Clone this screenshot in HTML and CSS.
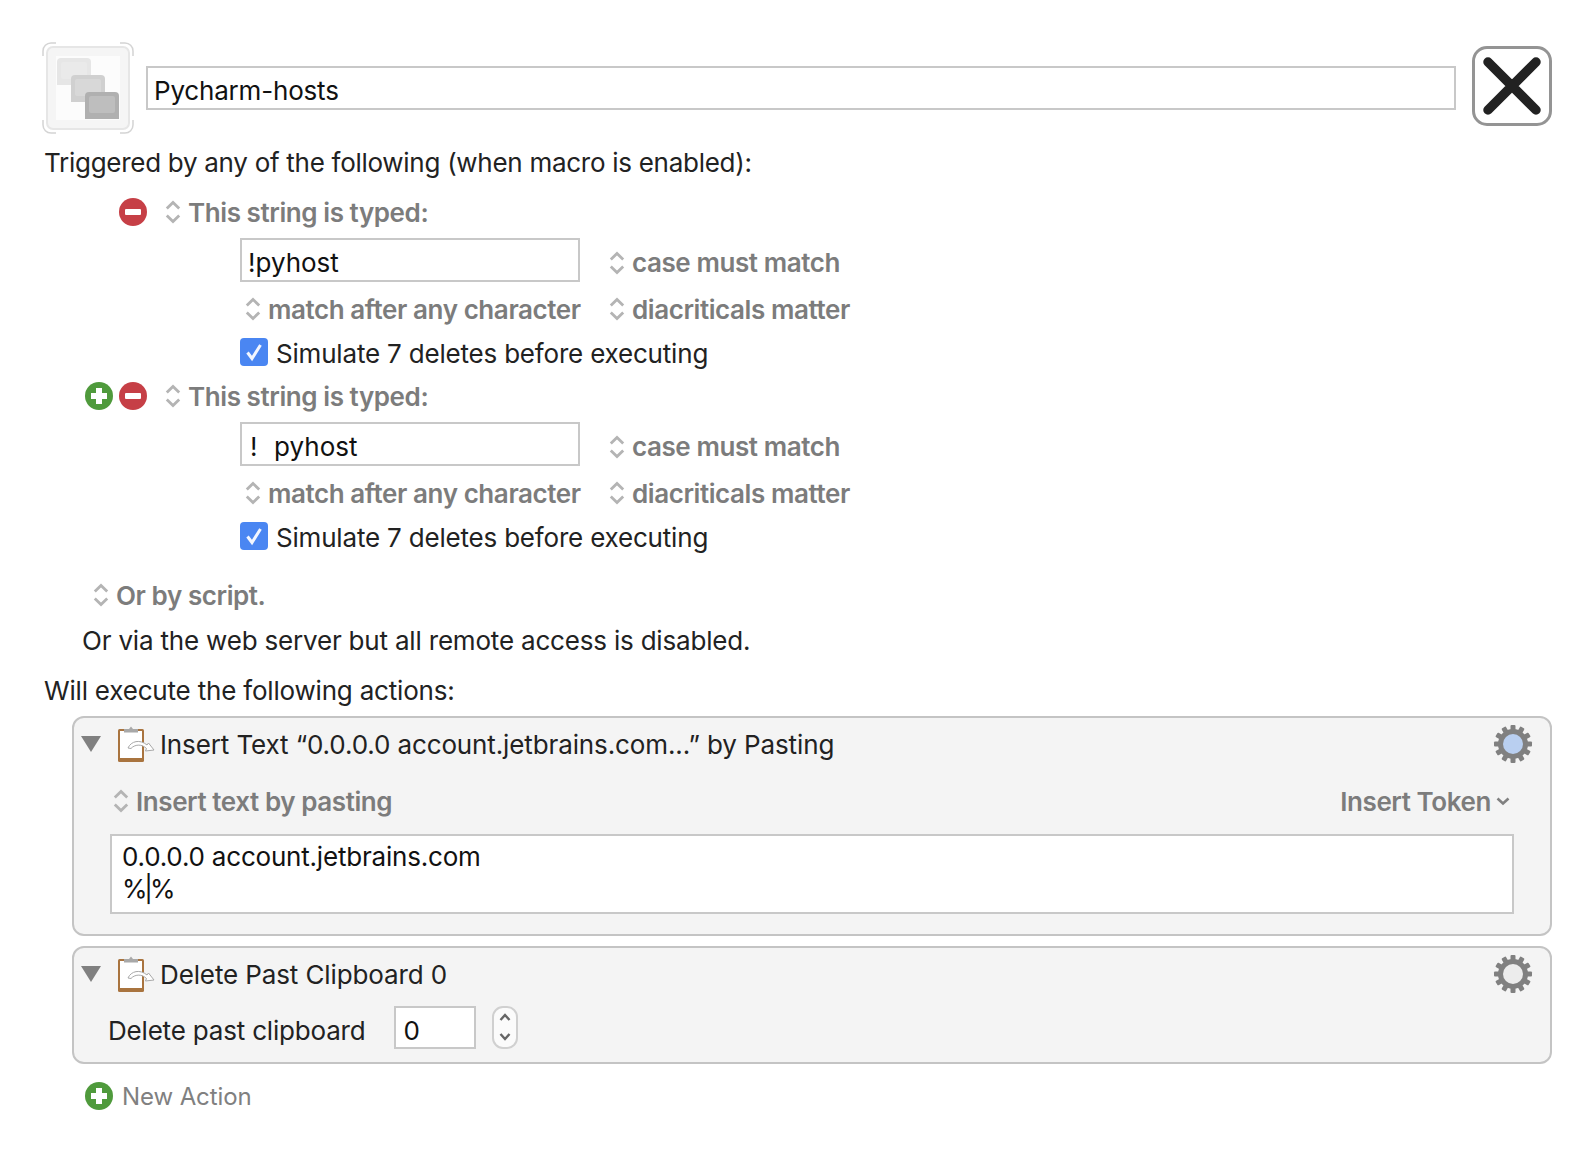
FILE: index.html
```html
<!DOCTYPE html>
<html lang="en">
<head>
    <meta charset="UTF-8">
    <title>Pycharm-hosts</title>
    <link rel="stylesheet" href="styles.css">
</head>
<body>
<svg class="defs" width="0" height="0">
    <symbol id="stepper" viewBox="0 0 16 28">
        <path d="M1.800 10.500 8 4.500l6.200 6M1.800 17.500 8 23.500l6.200-6" fill="none" stroke="#b4b4b4" stroke-width="2.800"/>
    </symbol>
    <symbol id="minus" viewBox="0 0 28 28">
        <circle cx="14" cy="14" r="14" fill="#c63f46"/>
        <rect x="6" y="11" width="16" height="6" rx="1" fill="#fff"/>
    </symbol>
    <symbol id="plus" viewBox="0 0 28 28">
        <circle cx="14" cy="14" r="14" fill="#4f9a3c"/>
        <path d="M11 6h6v5h5v6h-5v5h-6v-5H6v-6h5z" fill="#fff"/>
    </symbol>
    <symbol id="check" viewBox="0 0 28 28">
        <rect width="28" height="28" rx="4" fill="#4a86f2"/>
        <path d="M7.500 14.500 12 20.500 20.500 7" fill="none" stroke="#f2f6ff" stroke-width="3"/>
    </symbol>
    <symbol id="clip" viewBox="0 0 38 36">
        <rect x="1" y="3" width="26" height="33" rx="1.500" fill="#a9743f"/>
        <rect x="3" y="5" width="22" height="27" fill="#fff"/>
        <path d="M7 6.500V3h5L14 .5 16 3h5v3.500z" fill="#a8a8a8"/>
        <path d="M11 22c3-7 12-9 19-3l1.500-2 5.500 7-8.500 1 1-2.500c-5-5-12-4-15.500 0z" fill="#fff" stroke="#a8a8a8" stroke-width="1"/>
    </symbol>
    <symbol id="gear" viewBox="0 0 40 40">
        <g fill="#808080">
            <rect x="17.500" y="1" width="5" height="38" rx="1"/>
            <rect x="17.500" y="1" width="5" height="38" rx="1" transform="rotate(30 20 20)"/>
            <rect x="17.500" y="1" width="5" height="38" rx="1" transform="rotate(60 20 20)"/>
            <rect x="17.500" y="1" width="5" height="38" rx="1" transform="rotate(90 20 20)"/>
            <rect x="17.500" y="1" width="5" height="38" rx="1" transform="rotate(120 20 20)"/>
            <rect x="17.500" y="1" width="5" height="38" rx="1" transform="rotate(150 20 20)"/>
            <circle cx="20" cy="20" r="15"/>
        </g>
    </symbol>
    <symbol id="key" viewBox="0 0 34 27">
        <path d="M4 0h26a4 4 0 0 1 4 4v23H0V4a4 4 0 0 1 4-4z"/>
        <rect x="4" y="4" width="26" height="17" rx="2" fill="#fff" fill-opacity=".18"/>
    </symbol>
</svg>

<div class="page">
    <!-- title row -->
    <div class="title-row">
        <svg class="macro-icon" viewBox="0 0 92 92">
            <rect x="5" y="5" width="82" height="82" rx="6" fill="#f5f5f5" stroke="#e6e6e6" stroke-width="2"/>
            <rect x="14" y="14" width="64" height="64" fill="#fcfcfc"/>
            <path d="M1 14V9a8 8 0 0 1 8-8h5M78 1h5a8 8 0 0 1 8 8v5M91 78v5a8 8 0 0 1-8 8h-5M14 91H9a8 8 0 0 1-8-8v-5" fill="none" stroke="#d4d4d4" stroke-width="1.500"/>
            <use href="#key" x="15" y="16" width="34" height="27" fill="#e6e6e6"/>
            <use href="#key" x="29" y="33" width="34" height="27" fill="#d0d0d0"/>
            <use href="#key" x="43" y="50" width="34" height="27" fill="#b0b0b0"/>
        </svg>
        <div class="field name-field">Pycharm-hosts</div>
        <div class="close-btn">
            <svg width="60" height="60" viewBox="0 0 60 60">
                <path d="M6 6 54 54M54 6 6 54" stroke="#222" stroke-width="9.500" stroke-linecap="round"/>
            </svg>
        </div>
    </div>

    <div class="line triggered">Triggered by any of the following (when macro is enabled):</div>

    <!-- triggers -->
    <div class="head first">
        <svg class="round"><use href="#minus"/></svg>
        <svg class="step"><use href="#stepper"/></svg>
        <span class="bold">This string is typed:</span>
    </div>
    <div class="opts input-row">
        <div class="field str-field">!pyhost</div>
        <svg class="step"><use href="#stepper"/></svg>
        <span class="bold">case must match</span>
    </div>
    <div class="opts opts-row">
        <div class="after">
            <svg class="step"><use href="#stepper"/></svg>
            <span class="bold">match after any character</span>
        </div>
        <svg class="step"><use href="#stepper"/></svg>
        <span class="bold">diacriticals matter</span>
    </div>
    <div class="opts sim-row">
        <svg class="check"><use href="#check"/></svg>
        <span>Simulate 7 deletes before executing</span>
    </div>

    <div class="head second">
        <svg class="round"><use href="#plus"/></svg>
        <svg class="round"><use href="#minus"/></svg>
        <svg class="step"><use href="#stepper"/></svg>
        <span class="bold">This string is typed:</span>
    </div>
    <div class="opts input-row">
        <div class="field str-field wide-gap">!&nbsp;&nbsp;pyhost</div>
        <svg class="step"><use href="#stepper"/></svg>
        <span class="bold">case must match</span>
    </div>
    <div class="opts opts-row">
        <div class="after">
            <svg class="step"><use href="#stepper"/></svg>
            <span class="bold">match after any character</span>
        </div>
        <svg class="step"><use href="#stepper"/></svg>
        <span class="bold">diacriticals matter</span>
    </div>
    <div class="opts sim-row">
        <svg class="check"><use href="#check"/></svg>
        <span>Simulate 7 deletes before executing</span>
    </div>

    <div class="line script-row">
        <svg class="step"><use href="#stepper"/></svg>
        <span class="bold">Or by script.</span>
    </div>
    <div class="line web-row">Or via the web server but all remote access is disabled.</div>
    <div class="line exec-row">Will execute the following actions:</div>

    <!-- actions -->
    <div class="action">
        <div class="action-head">
            <span class="tri"></span>
            <svg class="clip"><use href="#clip"/></svg>
            <span class="action-title">Insert Text “0.0.0.0 account.jetbrains.com...” by Pasting</span>
            <svg class="gear" viewBox="0 0 40 40">
                <use href="#gear"/>
                <circle cx="20" cy="20" r="10" fill="#b9cff0"/>
            </svg>
        </div>
        <div class="action-sub">
            <svg class="step"><use href="#stepper"/></svg>
            <span class="bold">Insert text by pasting</span>
            <span class="bold token">Insert Token</span>
            <svg class="token-arrow" width="14" height="10" viewBox="0 0 14 10">
                <path d="M1.500 2.500 7 7.500l5.500-5" fill="none" stroke="#808080" stroke-width="2.600"/>
            </svg>
        </div>
        <div class="field text-area">0.0.0.0 account.jetbrains.com<br>%<span class="pipe">|</span>%</div>
    </div>

    <div class="action second-action">
        <div class="action-head">
            <span class="tri"></span>
            <svg class="clip"><use href="#clip"/></svg>
            <span class="action-title">Delete Past Clipboard 0</span>
            <svg class="gear" viewBox="0 0 40 40">
                <use href="#gear"/>
                <circle cx="20" cy="20" r="10" fill="#ececec"/>
            </svg>
        </div>
        <div class="clip-row">
            <span class="clip-label">Delete past clipboard</span>
            <div class="field num-field">0</div>
            <div class="num-step">
                <svg width="14" height="36" viewBox="0 0 14 36">
                    <path d="M2.500 11 7 6l4.500 5M2.500 25 7 30l4.500-5" fill="none" stroke="#666" stroke-width="2.400"/>
                </svg>
            </div>
        </div>
    </div>

    <div class="new-action">
        <svg class="round"><use href="#plus"/></svg>
        <span>New Action</span>
    </div>
</div>
</body>
</html>
```

FILE: styles.css
```css
* {
    margin: 0;
    padding: 0;
    box-sizing: border-box;
}

body {
    background-color: white;
    color: #222;
    font-family: Inter, "Noto Sans", sans-serif;
    font-size: 26px;
    letter-spacing: -0.19px;
}

.defs {
    display: block;
    height: 0;
}

.page {
    padding: 42px 40px 0 42px;
}

.field {
    background-color: white;
    border: 2px solid #c8c8c8;
    color: #111;
}

.bold {
    font-weight: 600;
    color: #7c7c7c;
    letter-spacing: -0.42px;
}

.step {
    width: 16px;
    height: 28px;
    flex: none;
}

.round {
    width: 28px;
    height: 28px;
    flex: none;
}

/* title row */
.title-row {
    display: flex;
    align-items: center;
    height: 92px;
}

.macro-icon {
    width: 92px;
    height: 92px;
    flex: none;
}

.name-field {
    flex: 1;
    height: 44px;
    line-height: 46px;
    margin-left: 12px;
    padding-left: 6px;
}

.close-btn {
    width: 80px;
    height: 80px;
    flex: none;
    margin-left: 16px;
    margin-bottom: 4px;
    border: 3px solid #949494;
    border-radius: 15px;
    display: flex;
    align-items: center;
    justify-content: center;
}

.line {
    height: 40px;
    display: flex;
    align-items: center;
}

.triggered {
    margin-top: 8px;
    margin-left: 2px;
    letter-spacing: -0.28px;
}

/* triggers */
.head {
    height: 40px;
    margin-top: 10px;
    display: flex;
    align-items: center;
}

.head .round {
    margin-right: 6px;
}

.head .step {
    margin-left: 12px;
    margin-right: 7px;
}

.first {
    padding-left: 77px;
}

.second {
    margin-top: 5px;
    padding-left: 43px;
}

.opts {
    display: flex;
    align-items: center;
    padding-left: 198px;
}

.opts .step {
    margin-right: 7px;
}

.input-row {
    height: 44px;
    margin-top: 6px;
}

.input-row .step,
.input-row .bold {
    margin-top: 5px;
}

.str-field {
    width: 340px;
    height: 44px;
    line-height: 46px;
    padding-left: 6px;
    margin-right: 29px;
    letter-spacing: 0;
}

.wide-gap {
    padding-left: 8px;
    word-spacing: 1px;
}

.opts-row {
    height: 32px;
    margin-top: 11px;
}

.after {
    width: 369px;
    display: flex;
    align-items: center;
    padding-left: 5px;
}

.sim-row {
    height: 36px;
    margin-top: 10px;
}

.check {
    width: 28px;
    height: 28px;
    flex: none;
    margin-right: 8px;
    margin-bottom: 2px;
}

.script-row {
    margin-top: 20px;
    padding-left: 51px;
}

.script-row .step {
    margin-right: 7px;
}

.web-row {
    margin-top: 5px;
    padding-left: 40px;
}

.exec-row {
    margin-top: 10px;
    padding-left: 2px;
}

/* actions */
.action {
    margin-top: 6px;
    margin-left: 30px;
    height: 220px;
    background-color: #f4f4f4;
    border: 2px solid #c4c4c4;
    border-radius: 12px;
}

.second-action {
    margin-top: 10px;
    height: 118px;
}

.action-head {
    display: flex;
    align-items: center;
    height: 52px;
    padding-left: 7px;
    padding-right: 17px;
}

.tri {
    width: 0;
    height: 0;
    flex: none;
    border-left: 10px solid transparent;
    border-right: 10px solid transparent;
    border-top: 16px solid #808080;
}

.clip {
    width: 38px;
    height: 36px;
    flex: none;
    margin-left: 16px;
}

.action-title {
    flex: 1;
    margin-left: 5px;
    letter-spacing: -0.12px;
}

.gear {
    width: 40px;
    height: 40px;
    flex: none;
}

.action-sub {
    display: flex;
    align-items: center;
    height: 40px;
    margin-top: 11px;
    padding-left: 39px;
    padding-right: 40px;
}

.action-sub .step {
    margin-right: 7px;
}

.token {
    margin-left: auto;
}

.token-arrow {
    margin-left: 5px;
}

.text-area {
    margin: 13px 36px 0;
    height: 80px;
    padding: 5px 10px;
    line-height: 32px;
    letter-spacing: -0.2px;
}

.pipe {
    letter-spacing: -3px;
    margin-left: -3px;
}

.clip-row {
    display: flex;
    align-items: center;
    height: 44px;
    margin-top: 5px;
    padding-left: 34px;
}

.clip-label {
    margin-top: 6px;
}

.num-field {
    width: 82px;
    height: 43px;
    line-height: 45px;
    padding-left: 7px;
    margin-left: 29px;
    letter-spacing: 0;
}

.num-step {
    width: 26px;
    height: 43px;
    margin-left: 16px;
    background-color: #fbfbfb;
    border: 2px solid #d0d0d0;
    border-radius: 11px;
    display: flex;
    align-items: center;
    justify-content: center;
}

.new-action {
    display: flex;
    align-items: center;
    height: 40px;
    margin-top: 12px;
    padding-left: 43px;
    color: #808080;
    font-size: 24px;
    letter-spacing: -0.1px;
}

.new-action span {
    margin-left: 9px;
}
```
